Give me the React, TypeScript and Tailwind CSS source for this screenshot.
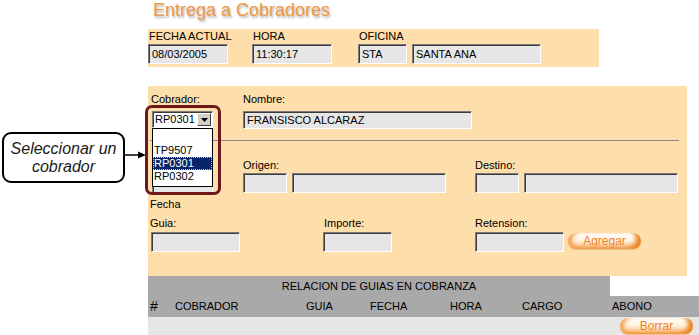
import React from "react";

const font = { fontFamily: '"Liberation Sans", Arial, sans-serif' };

function Field({ w, h = 20, value }: { w: number; h?: number; value?: string }) {
  return (
    <div
      className="flex items-center border border-t-[#7a7a7a] border-l-[#7a7a7a] border-b-white border-r-white bg-[#e6e6e6] pl-[3px] text-[11px] leading-none text-black shadow-[inset_1px_1px_0_#3c3c3c]"
      style={{ width: w, height: h }}
    >
      {value}
    </div>
  );
}

function Label({ children, className = "" }: { children: React.ReactNode; className?: string }) {
  return <div className={`h-[13px] text-[11px] leading-[13px] text-black ${className}`}>{children}</div>;
}

function PillButton({ children, w }: { children: React.ReactNode; w: number }) {
  return (
    <button
      type="button"
      className="flex h-[16px] items-center justify-center rounded-full bg-gradient-to-b from-[#ffffff] via-[#fff1dc] to-[#f5a452] text-[12px] leading-none text-[#ee7d18] shadow-[inset_6px_0_4px_-2px_#f4a252,inset_-7px_-2px_4px_-2px_#ea8626,0_1px_1px_#efbf8c] [text-shadow:0_0_1px_#fff]"
      style={{ width: w }}
    >
      {children}
    </button>
  );
}

export default function App() {
  return (
    <div className="relative h-[335px] w-[699px] overflow-hidden bg-white" style={font}>
      <div className="pl-[148px]">
        {/* Title */}
        <h1 className="ml-[5px] h-[20px] text-[18px] leading-[20px] text-[#ec984a] [text-shadow:1px_2px_2px_rgba(60,40,20,0.35)]">
          Entrega a Cobradores
        </h1>

        {/* Fecha / Hora / Oficina */}
        <div className="mt-[9px] flex h-[38px] w-[451px] bg-[#fedeaa] pt-[1px]">
          <div className="w-[104px]">
            <Label className="pl-[1px]">FECHA ACTUAL</Label>
            <div className="mt-[1px]">
              <Field w={80} value="08/03/2005" />
            </div>
          </div>
          <div className="w-[106px]">
            <Label className="pl-[1px]">HORA</Label>
            <div className="mt-[1px]">
              <Field w={80} value="11:30:17" />
            </div>
          </div>
          <div>
            <Label className="pl-[1px]">OFICINA</Label>
            <div className="mt-[1px] flex gap-[5px]">
              <Field w={49} value="STA" />
              <Field w={129} value="SANTA ANA" />
            </div>
          </div>
        </div>

        {/* Captura */}
        <div className="mt-[19px] h-[190px] w-[539px] bg-[#fedeaa] px-[3px] pt-[7px]">
          <div className="flex">
            <div className="w-[92px]">
              <Label>Cobrador:</Label>
              <div className="ml-[1px] mt-[5px] flex h-[17px] w-[61px] items-center border border-t-[#7a7a7a] border-l-[#7a7a7a] border-b-white border-r-white bg-white pl-[2px] text-[11px] leading-none shadow-[inset_1px_1px_0_#3c3c3c]">
                <span className="flex-1">RP0301</span>
                <span className="mr-[1px] flex h-[13px] w-[14px] items-center justify-center border border-t-white border-l-white border-b-[#404040] border-r-[#404040] bg-[#d4d0c8]">
                  <svg width="7" height="4" viewBox="0 0 7 4">
                    <path d="M0 0h7L3.5 4z" fill="#000" />
                  </svg>
                </span>
              </div>
            </div>
            <div>
              <Label>Nombre:</Label>
              <div className="mt-[5px]">
                <Field w={229} h={18} value="FRANSISCO ALCARAZ" />
              </div>
            </div>
          </div>

          <div className="ml-[-1px] mt-[11px] h-px w-[529px] bg-[#8a8a8a]" />

          <div className="mt-[18px] flex">
            <div className="w-[92px] pt-[14px]">
              <div className="ml-[1px]">
                <Field w={61} />
              </div>
            </div>
            <div className="w-[232px]">
              <Label>Origen:</Label>
              <div className="mt-[1px] flex gap-[5px]">
                <Field w={44} />
                <Field w={154} />
              </div>
            </div>
            <div>
              <Label>Destino:</Label>
              <div className="mt-[1px] flex gap-[5px]">
                <Field w={44} />
                <Field w={154} />
              </div>
            </div>
          </div>

          <Label className="mt-[5px] ml-[-1px]">Fecha</Label>

          <div className="mt-[6px] flex">
            <div className="w-[172px]">
              <Label className="ml-[-1px]">Guia:</Label>
              <div className="mt-[2px]">
                <Field w={89} />
              </div>
            </div>
            <div className="w-[152px]">
              <Label className="ml-[1px]">Importe:</Label>
              <div className="mt-[2px]">
                <Field w={69} />
              </div>
            </div>
            <div>
              <Label>Retension:</Label>
              <div className="mt-[2px] flex items-start gap-[4px]">
                <Field w={89} />
                <div className="mt-[1px]">
                  <PillButton w={73}>Agregar</PillButton>
                </div>
              </div>
            </div>
          </div>
        </div>

        {/* Relacion */}
        <div className="flex h-[20px] w-[462px] items-center justify-center bg-[#a9a9a9] text-[11px] text-black">
          RELACION DE GUIAS EN COBRANZA
        </div>
        <div className="flex h-[21px] w-[551px] items-center bg-[#a9a9a9] pl-[2px] text-[11px] text-black">
          <span className="w-[25px] text-[14px]">#</span>
          <span className="w-[131px]">COBRADOR</span>
          <span className="w-[64px]">GUIA</span>
          <span className="w-[80px]">FECHA</span>
          <span className="w-[72px]">HORA</span>
          <span className="w-[90px]">CARGO</span>
          <span>ABONO</span>
        </div>
        <div className="flex h-[18px] w-[551px] items-center justify-end bg-[#e6e6e6] pr-[6px]">
          <PillButton w={73}>Borrar</PillButton>
        </div>
      </div>

      {/* Lista desplegada del cobrador */}
      <div className="absolute left-[152px] top-[128px] w-[61px] border border-black bg-white pt-[15px] pb-[3px] text-[11px] leading-[13px]">
        <div className="h-[13px] pl-[1px]">TP9507</div>
        <div className="h-[13px] border border-dotted border-[#c8c8c8] bg-[#0a246a] pl-0 leading-[11px] text-white">RP0301</div>
        <div className="h-[13px] pl-[1px]">RP0302</div>
      </div>

      {/* Resaltado */}
      <div className="absolute left-[145px] top-[105px] h-[90px] w-[76px] rounded-[7px] border-[3px] border-[#701818]" />

      {/* Nota */}
      <div className="absolute left-[2px] top-[132px] flex h-[51px] w-[123px] flex-col items-center justify-center rounded-[9px] border-[2px] border-black bg-white text-[16px] italic leading-[18px] text-[#1a1a1a]">
        <span>Seleccionar un</span>
        <span>cobrador</span>
      </div>
      <svg className="absolute left-[125px] top-[150px]" width="22" height="10" viewBox="0 0 22 10">
        <line x1="0" y1="5" x2="14" y2="5" stroke="#000" strokeWidth="1.5" />
        <path d="M13 1.5L21 5L13 8.5z" fill="#000" />
      </svg>
    </div>
  );
}
